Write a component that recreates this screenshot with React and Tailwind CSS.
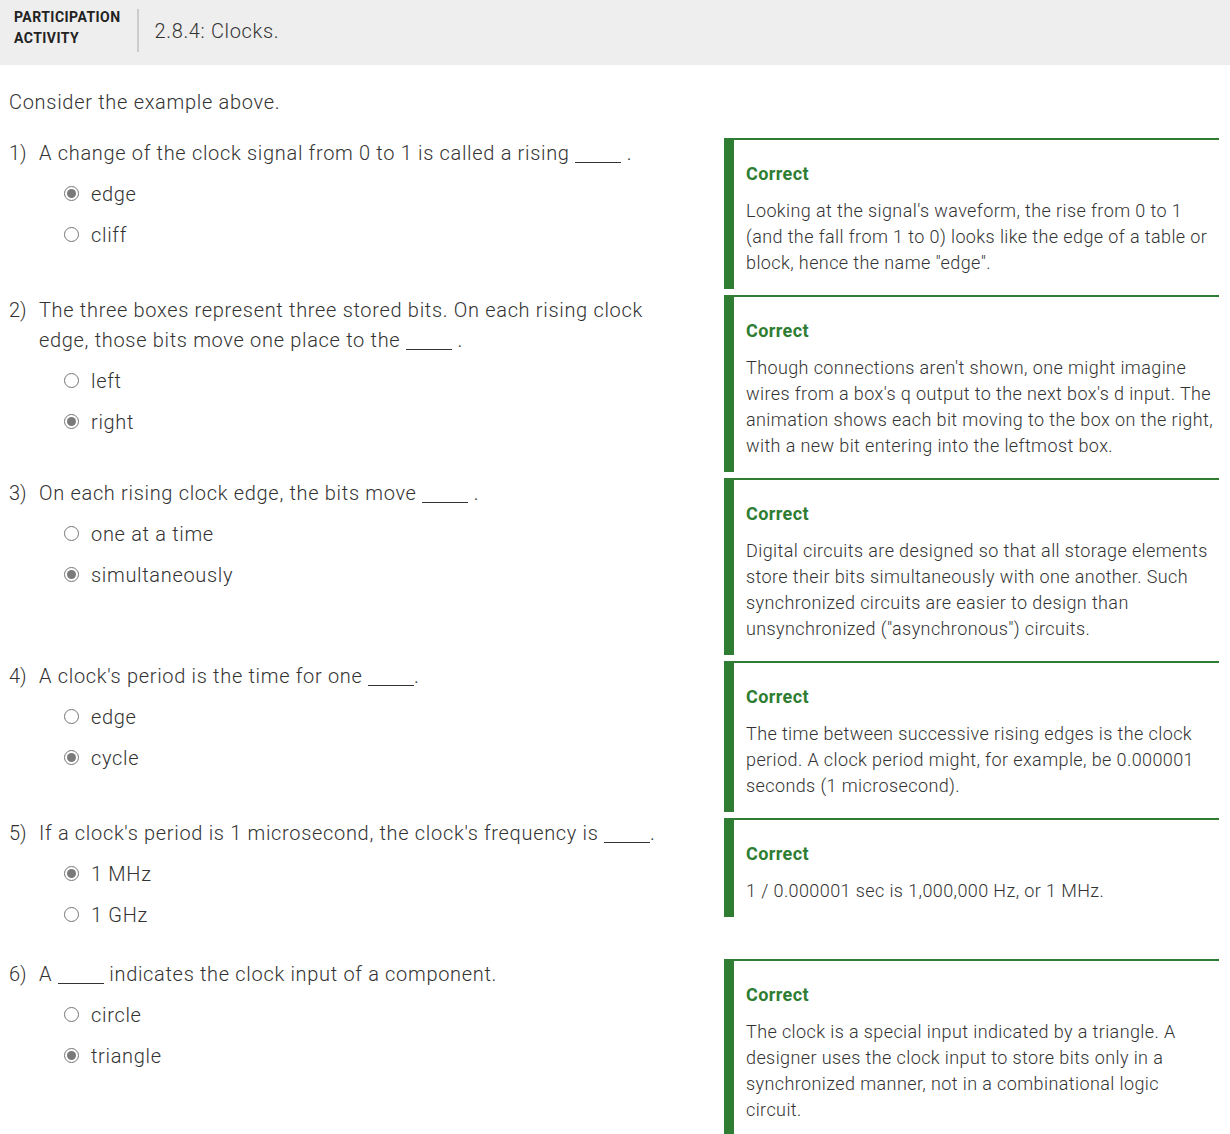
import React from "react";

const rows = [
  {
    n: "1)",
    q: "A change of the clock signal from 0 to 1 is called a rising _____ .",
    opts: ["edge", "cliff"],
    sel: 0,
    exp: "Looking at the signal's waveform, the rise from 0 to 1 (and the fall from 1 to 0) looks like the edge of a table or block, hence the name \"edge\".",
  },
  {
    n: "2)",
    q: "The three boxes represent three stored bits. On each rising clock edge, those bits move one place to the _____ .",
    opts: ["left", "right"],
    sel: 1,
    exp: "Though connections aren't shown, one might imagine wires from a box's q output to the next box's d input. The animation shows each bit moving to the box on the right, with a new bit entering into the leftmost box.",
  },
  {
    n: "3)",
    q: "On each rising clock edge, the bits move _____ .",
    opts: ["one at a time", "simultaneously"],
    sel: 1,
    exp: "Digital circuits are designed so that all storage elements store their bits simultaneously with one another. Such synchronized circuits are easier to design than unsynchronized (\"asynchronous\") circuits.",
  },
  {
    n: "4)",
    q: "A clock's period is the time for one _____.",
    opts: ["edge", "cycle"],
    sel: 1,
    exp: "The time between successive rising edges is the clock period. A clock period might, for example, be 0.000001 seconds (1 microsecond).",
  },
  {
    n: "5)",
    q: "If a clock's period is 1 microsecond, the clock's frequency is _____.",
    opts: ["1 MHz", "1 GHz"],
    sel: 0,
    exp: "1 / 0.000001 sec is 1,000,000 Hz, or 1 MHz.",
  },
  {
    n: "6)",
    q: "A _____ indicates the clock input of a component.",
    opts: ["circle", "triangle"],
    sel: 1,
    exp: "The clock is a special input indicated by a triangle. A designer uses the clock input to store bits only in a synchronized manner, not in a combinational logic circuit.",
  },
];

function Radio({ checked }) {
  return (
    <span className="flex h-[15px] w-[15px] shrink-0 items-center justify-center rounded-full border border-[#757575] bg-white">
      {checked && <span className="block h-[9px] w-[9px] rounded-full bg-[#7a7a7a]" />}
    </span>
  );
}

function Question({ text }) {
  const parts = text.split("_____");
  return (
    <>
      {parts.map((p, i) => (
        <React.Fragment key={i}>
          {p}
          {i < parts.length - 1 && (
            <span className="mb-[-3px] inline-block w-[46px] border-b border-[#333333] align-baseline" />
          )}
        </React.Fragment>
      ))}
    </>
  );
}

export default function App() {
  return (
    <div
      className="w-[1230px] bg-white text-[#333333] font-light"
      style={{ fontFamily: "Roboto, 'Liberation Sans', sans-serif" }}
    >
      <div className="flex h-[65px] items-start bg-[#eeeeee] pl-[14px]">
        <div className="mt-[7px] text-[14px] font-bold leading-[21px] tracking-[0.45px] text-[#222222]">
          PARTICIPATION
          <br />
          ACTIVITY
        </div>
        <div className="ml-[16px] mt-[9px] h-[43px] w-[2px] bg-[#cccccc]" />
        <div className="ml-[16px] mt-[16px] text-[20px] leading-[30px] tracking-[0.65px] text-[#333333]">
          2.8.4: Clocks.
        </div>
      </div>

      <div className="pl-[9px] pr-[11px]">
        <div className="mt-[22px] mb-[21px] text-[20px] leading-[30px] tracking-[0.7px]">
          Consider the example above.
        </div>

        {rows.map((r, i) => (
          <div key={i} className="flex items-start">
            <div className="flex flex-1 pb-[24px] pr-[28px]">
              <div className="w-[30px] shrink-0 text-[20px] leading-[30px]">{r.n}</div>
              <div className="flex-1">
                <div className="text-[20px] leading-[30px] tracking-[0.68px]">
                  <Question text={r.q} />
                </div>
                <div className="mt-[5px] pl-[25px]">
                  {r.opts.map((o, j) => (
                    <div key={j} className="flex h-[41px] items-center gap-[12px] text-[20px] tracking-[0.68px]">
                      <Radio checked={j === r.sel} />
                      <span>{o}</span>
                    </div>
                  ))}
                </div>
              </div>
            </div>
            <div className="mb-[6px] w-[495px] shrink-0 border-l-[10px] border-t-2 border-[#2e7d32] pb-[13px] pl-[12px] pr-0 pt-[21px]">
              <div className="text-[18px] font-bold leading-[26px] tracking-[0.4px] text-[#2e7d32]">Correct</div>
              <div className="mt-[11px] text-[18px] leading-[26px] tracking-[0.4px]">{r.exp}</div>
            </div>
          </div>
        ))}
      </div>
    </div>
  );
}
